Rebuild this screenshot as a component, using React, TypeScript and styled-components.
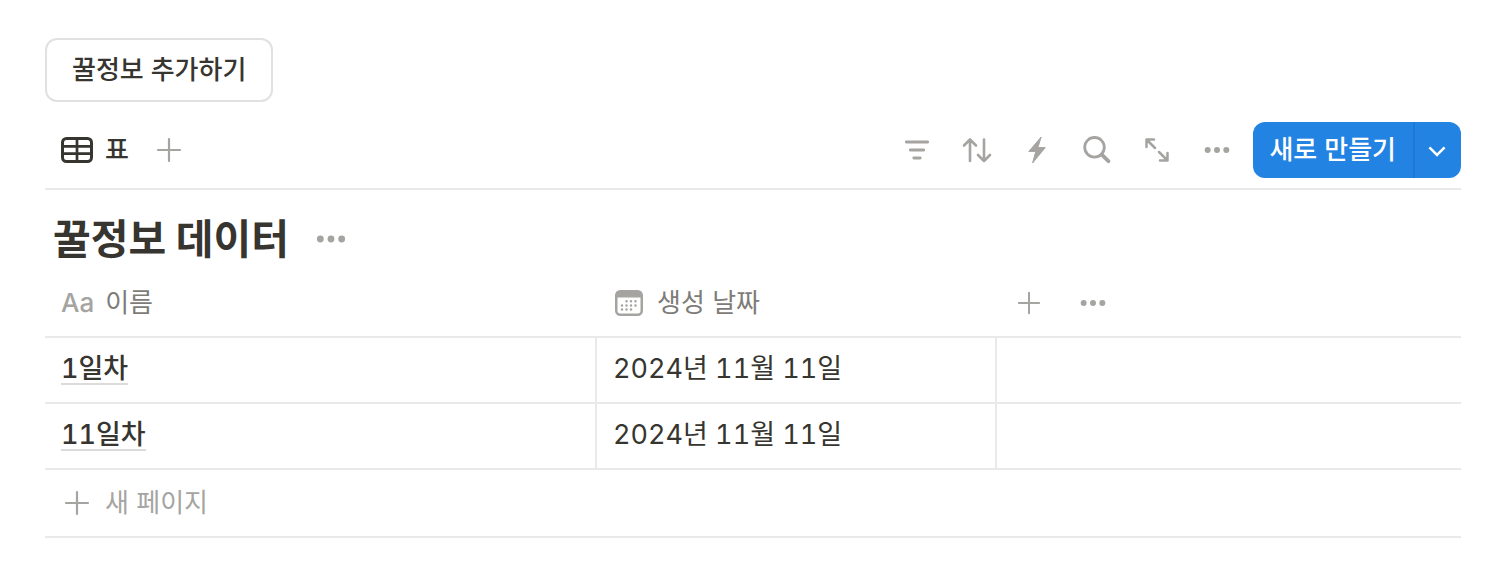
import React from "react";
import styled, { createGlobalStyle, css } from "styled-components";

const GlobalStyle = createGlobalStyle`
  *, *::before, *::after { box-sizing: border-box; }
  body {
    margin: 0;
    background: #ffffff;
    color: #37352f;
    font-family: Inter, "Noto Sans CJK KR", sans-serif;
    font-size: 26px;
    line-height: 36px;
  }
  button { font: inherit; color: inherit; background: none; border: 0; padding: 0; cursor: pointer; }
  svg { display: block; flex: none; }
`;

const Page = styled.main`
  padding: 38px 45px 40px;
`;

const OutlineButton = styled.button`
  && {
    height: 64px;
    padding: 0 25px;
    border: 2px solid #e1e1e0;
    border-radius: 12px;
    font-weight: 500;
  }
`;

const Toolbar = styled.div`
  display: flex;
  align-items: center;
  justify-content: space-between;
  margin-top: 20px;
  padding-bottom: 10px;
  border-bottom: 2px solid #e9e9e7;
`;

const Group = styled.div`
  display: flex;
  align-items: center;
`;

const ViewTab = styled.button`
  && {
    display: flex;
    align-items: center;
    gap: 12px;
    height: 56px;
    padding: 0 10px 0 16px;
    font-weight: 500;
  }
`;

const IconButton = styled.button<{ $width?: number }>`
  && {
    display: inline-flex;
    align-items: center;
    justify-content: center;
    width: ${(p) => p.$width ?? 60}px;
    height: 56px;
    color: #a5a4a1;
  }
`;

const SplitButton = styled.div`
  display: flex;
  height: 56px;
  margin-left: 6px;
  border-radius: 12px;
  overflow: hidden;
  background: #2383e2;
  color: #ffffff;
`;

const NewButton = styled.button`
  && {
    padding: 0 17px 0 16px;
    font-weight: 500;
  }
`;

const NewMenuButton = styled.button`
  && {
    display: flex;
    align-items: center;
    justify-content: center;
    width: 48px;
    border-left: 2px solid #1f78d1;
  }
`;

const TitleRow = styled.div`
  display: flex;
  align-items: center;
  padding: 16px 0 0 8px;
`;

const Title = styled.h1`
  margin: 0;
  font-size: 41px;
  line-height: 66px;
  font-weight: 700;
`;

const DataTable = styled.table`
  width: 100%;
  table-layout: fixed;
  border-collapse: separate;
  border-spacing: 0;
`;

const NameCol = styled.col`
  width: 552px;
`;

const DateCol = styled.col`
  width: 400px;
`;

const cell = css`
  height: 66px;
  padding: 0 16px 2px;
  border-bottom: 2px solid #e9e9e7;
  text-align: left;
  vertical-align: middle;
`;

const HeadCell = styled.th`
  ${cell}
  color: #7d7c78;
  font-weight: 400;
`;

const HeadLabel = styled.span<{ $gap: number; $inset?: number }>`
  display: flex;
  align-items: center;
  gap: ${(p) => p.$gap}px;
  padding-left: ${(p) => p.$inset ?? 0}px;
`;

const TypeGlyph = styled.span`
  color: #a5a4a1;
  font-weight: 500;
`;

const HeadActions = styled.span`
  display: flex;
`;

const BodyCell = styled.td`
  ${cell}
  font-size: 27px;
  font-variant-numeric: tabular-nums;

  &:not(:last-child) {
    border-right: 2px solid #e9e9e7;
  }
`;

const PageLink = styled.a`
  display: inline-block;
  border-bottom: 2px solid #dcdbd9;
  color: inherit;
  font-weight: 500;
  line-height: 28px;
  text-decoration: none;
`;

const NewPageButton = styled.button`
  && {
    display: flex;
    align-items: center;
    gap: 15px;
    width: 100%;
    height: 68px;
    padding: 0 19px;
    border-bottom: 2px solid #e9e9e7;
    color: #a5a4a1;
  }
`;

const Plus = ({ size = 26 }: { size?: number }) => (
  <svg width={size} height={size} viewBox="0 0 26 26" fill="none" stroke="currentColor" strokeWidth="2.2" strokeLinecap="round">
    <path d="M13 2v22M2 13h22" />
  </svg>
);

const Dots = ({ size = 30 }: { size?: number }) => (
  <svg width={size} height={size} viewBox="0 0 30 30" fill="currentColor">
    <circle cx="5" cy="15" r="3.2" />
    <circle cx="15" cy="15" r="3.2" />
    <circle cx="25" cy="15" r="3.2" />
  </svg>
);

const TableIcon = () => (
  <svg width="32" height="26" viewBox="0 0 32 26" fill="none" stroke="currentColor">
    <rect x="1.5" y="1.5" width="29" height="23" rx="4" strokeWidth="3" />
    <path d="M16 2v22M2 9.3h28M2 16.7h28" strokeWidth="2.7" />
  </svg>
);

const FilterIcon = () => (
  <svg width="28" height="28" viewBox="0 0 28 28" fill="none" stroke="currentColor" strokeWidth="2.8" strokeLinecap="round">
    <path d="M3.3 6h21.4M7.3 14h13.4M10.8 22h6.4" />
  </svg>
);

const SortIcon = () => (
  <svg width="30" height="28" viewBox="0 0 30 28" fill="none" stroke="currentColor" strokeWidth="2.6" strokeLinecap="round" strokeLinejoin="round">
    <path d="M8 25V3.5M2 9.5l6-6 6 6M22 3.5V25M16 19l6 6 6-6" />
  </svg>
);

const BoltIcon = () => (
  <svg width="20" height="28" viewBox="0 0 20 28" fill="currentColor" stroke="currentColor" strokeLinejoin="round">
    <path d="M14.2 1 1.8 15.4h7L5.6 27 18.2 11.6h-7.4z" />
  </svg>
);

const SearchIcon = () => (
  <svg width="28" height="28" viewBox="0 0 28 28" fill="none" stroke="currentColor" strokeLinecap="round">
    <circle cx="11.5" cy="11.3" r="9.8" strokeWidth="2.8" />
    <path d="m18.8 18.6 6.6 6.6" strokeWidth="3.8" />
  </svg>
);

const ExpandIcon = () => (
  <svg width="26" height="26" viewBox="0 0 26 26" fill="none" stroke="currentColor" strokeWidth="2.5" strokeLinecap="round" strokeLinejoin="round">
    <path d="M2.5 10V2.5H10M3 3l8 8M23.5 16v7.5H16M23 23l-8-8" />
  </svg>
);

const ChevronIcon = () => (
  <svg width="20" height="20" viewBox="0 0 20 20" fill="none" stroke="currentColor" strokeWidth="2.5">
    <path d="m1.4 7.4 7.6 7.6 7.6-7.6" />
  </svg>
);

const CalendarIcon = () => (
  <svg width="28" height="26" viewBox="0 0 28 26" fill="none" color="#a5a4a1">
    <rect x="1.25" y="1.25" width="25.5" height="23.5" rx="4" stroke="currentColor" strokeWidth="2.5" />
    <path d="M1 7.5V5a4 4 0 0 1 4-4h18a4 4 0 0 1 4 4v2.5z" fill="currentColor" />
    <path
      d="M11.5 11.2h0M16 11.2h0M20.5 11.2h0M7 15.4h0M11.5 15.4h0M16 15.4h0M20.5 15.4h0M7 19.6h0M11.5 19.6h0M16 19.6h0"
      stroke="currentColor"
      strokeWidth="2.5"
      strokeLinecap="round"
    />
  </svg>
);

const rows = [
  { name: "1일차", date: "2024년 11월 11일" },
  { name: "11일차", date: "2024년 11월 11일" },
];

const tools = [
  { label: "필터", icon: <FilterIcon /> },
  { label: "정렬", icon: <SortIcon /> },
  { label: "자동화", icon: <BoltIcon /> },
  { label: "검색", icon: <SearchIcon /> },
  { label: "전체 페이지로 열기", icon: <ExpandIcon /> },
  { label: "더 보기", icon: <Dots size={28} /> },
];

export default function App() {
  return (
    <>
      <GlobalStyle />
      <Page>
        <OutlineButton type="button">꿀정보 추가하기</OutlineButton>

        <Toolbar>
          <Group>
            <ViewTab type="button">
              <TableIcon />표
            </ViewTab>
            <IconButton type="button" aria-label="보기 추가">
              <Plus />
            </IconButton>
          </Group>
          <Group>
            {tools.map((tool) => (
              <IconButton key={tool.label} type="button" aria-label={tool.label}>
                {tool.icon}
              </IconButton>
            ))}
            <SplitButton>
              <NewButton type="button">새로 만들기</NewButton>
              <NewMenuButton type="button" aria-label="새로 만들기 옵션">
                <ChevronIcon />
              </NewMenuButton>
            </SplitButton>
          </Group>
        </Toolbar>

        <TitleRow>
          <Title>꿀정보 데이터</Title>
          <IconButton type="button" $width={84} aria-label="데이터베이스 메뉴">
            <Dots size={32} />
          </IconButton>
        </TitleRow>

        <DataTable>
          <colgroup>
            <NameCol />
            <DateCol />
            <col />
          </colgroup>
          <thead>
            <tr>
              <HeadCell scope="col">
                <HeadLabel $gap={11}>
                  <TypeGlyph aria-hidden="true">Aa</TypeGlyph>이름
                </HeadLabel>
              </HeadCell>
              <HeadCell scope="col">
                <HeadLabel $gap={14} $inset={2}>
                  <CalendarIcon />
                  생성 날짜
                </HeadLabel>
              </HeadCell>
              <HeadCell as="td">
                <HeadActions>
                  <IconButton type="button" $width={32} aria-label="속성 추가">
                    <Plus size={24} />
                  </IconButton>
                  <IconButton type="button" $width={96} aria-label="속성 메뉴">
                    <Dots size={28} />
                  </IconButton>
                </HeadActions>
              </HeadCell>
            </tr>
          </thead>
          <tbody>
            {rows.map((row) => (
              <tr key={row.name}>
                <BodyCell>
                  <PageLink href="#">{row.name}</PageLink>
                </BodyCell>
                <BodyCell>{row.date}</BodyCell>
                <BodyCell />
              </tr>
            ))}
          </tbody>
        </DataTable>

        <NewPageButton type="button">
          <Plus />새 페이지
        </NewPageButton>
      </Page>
    </>
  );
}
